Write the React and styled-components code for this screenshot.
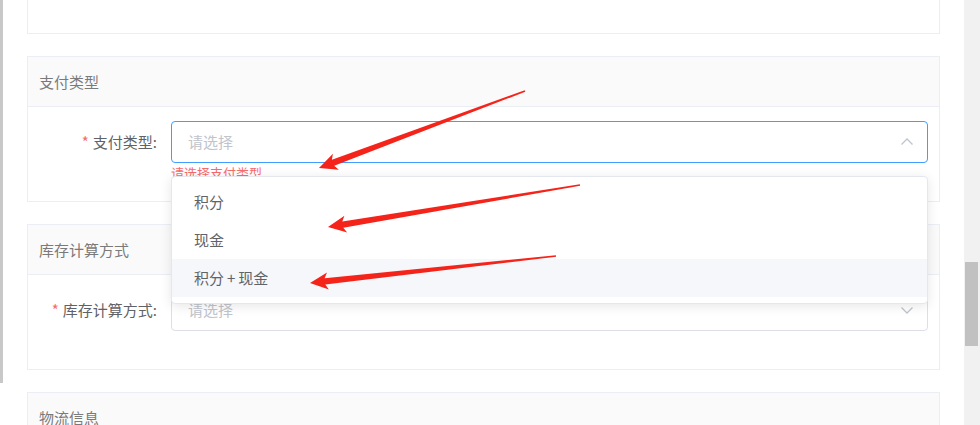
import React from "react";
import styled, { createGlobalStyle } from "styled-components";

const GlobalStyle = createGlobalStyle`
  *, *::before, *::after { box-sizing: border-box; }
  html, body { margin: 0; padding: 0; background: #fff; }
  body {
    font-family: "Noto Sans CJK SC", "Noto Sans", "Liberation Sans", sans-serif;
    -webkit-font-smoothing: antialiased;
  }
`;

const Screen = styled.div`
  position: relative;
  display: flex;
  width: 980px;
  height: 425px;
  overflow: hidden;
  background: #fff;
`;

const EdgeBar = styled.div`
  flex-shrink: 0;
  width: 3px;
  height: 383px;
  background: #c8c8c8;
`;

const Main = styled.main`
  flex: 1;
  min-width: 0;
  display: flex;
  flex-direction: column;
  gap: 22px;
  padding: 0 24px;
`;

const ScrollTrack = styled.div`
  flex-shrink: 0;
  width: 16px;
  height: 100%;
  background: #f1f1f1;
  padding: 262px 0 0 1px;
`;

const ScrollThumb = styled.div`
  width: 13px;
  height: 84px;
  background: #c1c1c1;
`;

const Card = styled.section`
  flex-shrink: 0;
  background: #fff;
  border: 1px solid #ebeef5;
  ${(p) => (p.$clipped ? "border-top: none; height: 34px;" : "height: 146px;")}
`;

const CardHeader = styled.header`
  height: 50px;
  display: flex;
  align-items: center;
  padding-left: 11px;
  background: #fafafa;
  border-bottom: 1px solid #ebeef5;
  font-size: 15px;
  color: #7a7a7a;
`;

const CardBody = styled.div`
  padding-top: 14px;
`;

const FormItem = styled.div`
  display: flex;
  align-items: flex-start;
`;

const Label = styled.label`
  flex-shrink: 0;
  width: 143px;
  padding-right: 14px;
  text-align: right;
  line-height: 41px;
  font-size: 15px;
  color: #5f6266;
`;

const Required = styled.span`
  color: #f56c6c;
  margin-right: 4px;
`;

const Control = styled.div`
  position: relative;
  flex: 1;
  margin-right: 11px;
`;

const SelectBox = styled.div`
  height: 42px;
  display: flex;
  align-items: center;
  justify-content: space-between;
  padding: 0 13px 1px 16px;
  border: 1px solid ${(p) => (p.$focused ? "#409eff" : "#dcdfe6")};
  border-radius: 4px;
  background: #fff;
`;

const Placeholder = styled.span`
  font-size: 15px;
  color: #c0c4cc;
`;

const ErrorText = styled.div`
  position: absolute;
  top: 100%;
  left: 0;
  padding-top: 3px;
  font-size: 13px;
  line-height: 1;
  color: #f56c6c;
`;

const Dropdown = styled.ul`
  position: absolute;
  z-index: 10;
  top: calc(100% + 13px);
  left: 0;
  right: 0;
  margin: 0;
  padding: 6px 0;
  list-style: none;
  background: #fff;
  border: 1px solid #e4e7ed;
  border-radius: 4px;
  box-shadow: 0 2px 12px 0 rgba(0, 0, 0, 0.1);
`;

const Option = styled.li`
  height: 38px;
  line-height: 37px;
  padding: 0 22px;
  font-size: 15px;
  color: #606266;
  background: ${(p) => (p.$hover ? "#f5f7fa" : "transparent")};
`;

const Plus = styled.span`
  margin: 0 3px;
`;

const Overlay = styled.svg`
  position: absolute;
  inset: 0;
  z-index: 20;
  pointer-events: none;
`;

const Chevron = ({ up }) => (
  <svg width="14" height="14" viewBox="0 0 14 14">
    <polyline
      points={up ? "1.5,9.5 7,4 12.5,9.5" : "1.5,4.5 7,10 12.5,4.5"}
      fill="none"
      stroke="#c0c4cc"
      strokeWidth="1.3"
    />
  </svg>
);

function arrowPoints(tail, tip) {
  const [tx, ty] = tail;
  const [px, py] = tip;
  const len = Math.hypot(px - tx, py - ty);
  const dx = (px - tx) / len;
  const dy = (py - ty) / len;
  const nx = -dy;
  const ny = dx;
  const H = 15;
  const W = 8.5;
  const w0 = 0.8;
  const w1 = 3.2;
  const jx = px - dx * H;
  const jy = py - dy * H;
  const bx = px - dx * (H + 3);
  const by = py - dy * (H + 3);
  const pts = [
    [tx + nx * w0, ty + ny * w0],
    [jx + nx * w1, jy + ny * w1],
    [bx + nx * W, by + ny * W],
    [px, py],
    [bx - nx * W, by - ny * W],
    [jx - nx * w1, jy - ny * w1],
    [tx - nx * w0, ty - ny * w0],
  ];
  return pts.map((p) => p.map((v) => v.toFixed(1)).join(",")).join(" ");
}

const arrows = [
  { tail: [525, 91], tip: [319, 168] },
  { tail: [580, 185], tip: [328, 227] },
  { tail: [556, 256], tip: [310, 283] },
];

const options = [
  { key: "points", content: "积分" },
  { key: "cash", content: "现金" },
  {
    key: "both",
    content: (
      <>
        积分<Plus>+</Plus>现金
      </>
    ),
    hover: true,
  },
];

export default function App() {
  return (
    <>
      <GlobalStyle />
      <Screen>
        <EdgeBar />
        <Main>
          <Card $clipped />
          <Card>
            <CardHeader>支付类型</CardHeader>
            <CardBody>
              <FormItem>
                <Label>
                  <Required>*</Required>支付类型:
                </Label>
                <Control>
                  <SelectBox $focused>
                    <Placeholder>请选择</Placeholder>
                    <Chevron up />
                  </SelectBox>
                  <ErrorText>请选择支付类型</ErrorText>
                  <Dropdown>
                    {options.map((o) => (
                      <Option key={o.key} $hover={o.hover}>
                        {o.content}
                      </Option>
                    ))}
                  </Dropdown>
                </Control>
              </FormItem>
            </CardBody>
          </Card>
          <Card>
            <CardHeader>库存计算方式</CardHeader>
            <CardBody>
              <FormItem>
                <Label>
                  <Required>*</Required>库存计算方式:
                </Label>
                <Control>
                  <SelectBox>
                    <Placeholder>请选择</Placeholder>
                    <Chevron />
                  </SelectBox>
                </Control>
              </FormItem>
            </CardBody>
          </Card>
          <Card>
            <CardHeader>物流信息</CardHeader>
          </Card>
        </Main>
        <ScrollTrack>
          <ScrollThumb />
        </ScrollTrack>
        <Overlay width="980" height="425" viewBox="0 0 980 425">
          {arrows.map((a, i) => (
            <polygon key={i} points={arrowPoints(a.tail, a.tip)} fill="#f5241b" />
          ))}
        </Overlay>
      </Screen>
    </>
  );
}
